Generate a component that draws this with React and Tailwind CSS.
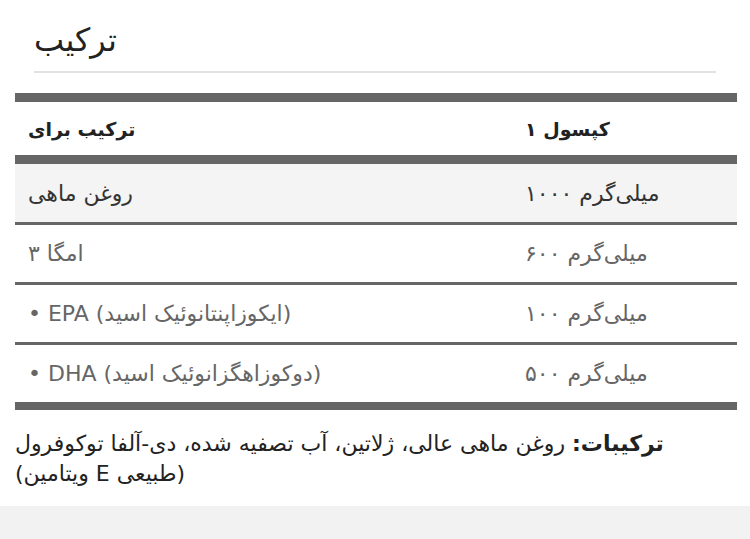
import React from 'react';

const rows = [
  { name: 'روغن ماهی', amount: 'میلی\u200cگرم ۱۰۰۰', shaded: true },
  { name: 'امگا ۳', amount: 'میلی\u200cگرم ۶۰۰' },
  { name: '• EPA (ایکوزاپنتانوئیک اسید)', amount: 'میلی\u200cگرم ۱۰۰' },
  { name: '• DHA (دوکوزاهگزانوئیک اسید)', amount: 'میلی\u200cگرم ۵۰۰' },
];

const App = () => {
  return (
    <div className="w-[750px] h-[539px] bg-white font-['DejaVu_Sans',sans-serif] flex flex-col">
      <div className="px-[34px] pt-[20px]">
        <h2 className="text-[32px] leading-[40px] text-[#222] pb-[11px] border-b-2 border-[#e2e2e2]">ترکیب</h2>
      </div>

      {/* supplement facts table */}
      <div className="mx-[15px] mt-[20px] w-[722px] border-t-[9px] border-b-[8px] border-[#666]">
        <div className="grid grid-cols-[497px_1fr] h-[62px] items-center text-[19px] font-bold text-[#222] border-b-[9px] border-[#666]">
          <div className="pl-[13px] pt-[2px]">ترکیب برای</div>
          <div className="pl-[13px] pt-[2px]">کپسول ۱</div>
        </div>
        {rows.map((row, i) => {
          const last = i === rows.length - 1;
          return (
            <div
              key={i}
              className={`grid grid-cols-[497px_1fr] items-center text-[22px] ${
                row.shaded ? 'h-[61px] bg-[#f4f4f4] text-[#333]' : last ? 'h-[57px] text-[#666]' : 'h-[60px] text-[#666]'
              } ${last ? '' : 'border-b-[3px] border-[#666]'}`}
            >
              <div className="pl-[13px]">{row.name}</div>
              <div className="pl-[13px]">{row.amount}</div>
            </div>
          );
        })}
      </div>

      <p dir="rtl" className="mx-[15px] mt-[19px] w-[722px] text-left text-[22px] leading-[30px] text-[#222]">
        <span className="font-bold">ترکیبات:</span> روغن ماهی عالی، ژلاتین، آب تصفیه شده، دی-آلفا توکوفرول
        <br />
        (طبیعی E ویتامین)
      </p>

      <div className="mt-auto h-[33px] bg-[#f2f2f2]" />
    </div>
  );
};

export default App;
